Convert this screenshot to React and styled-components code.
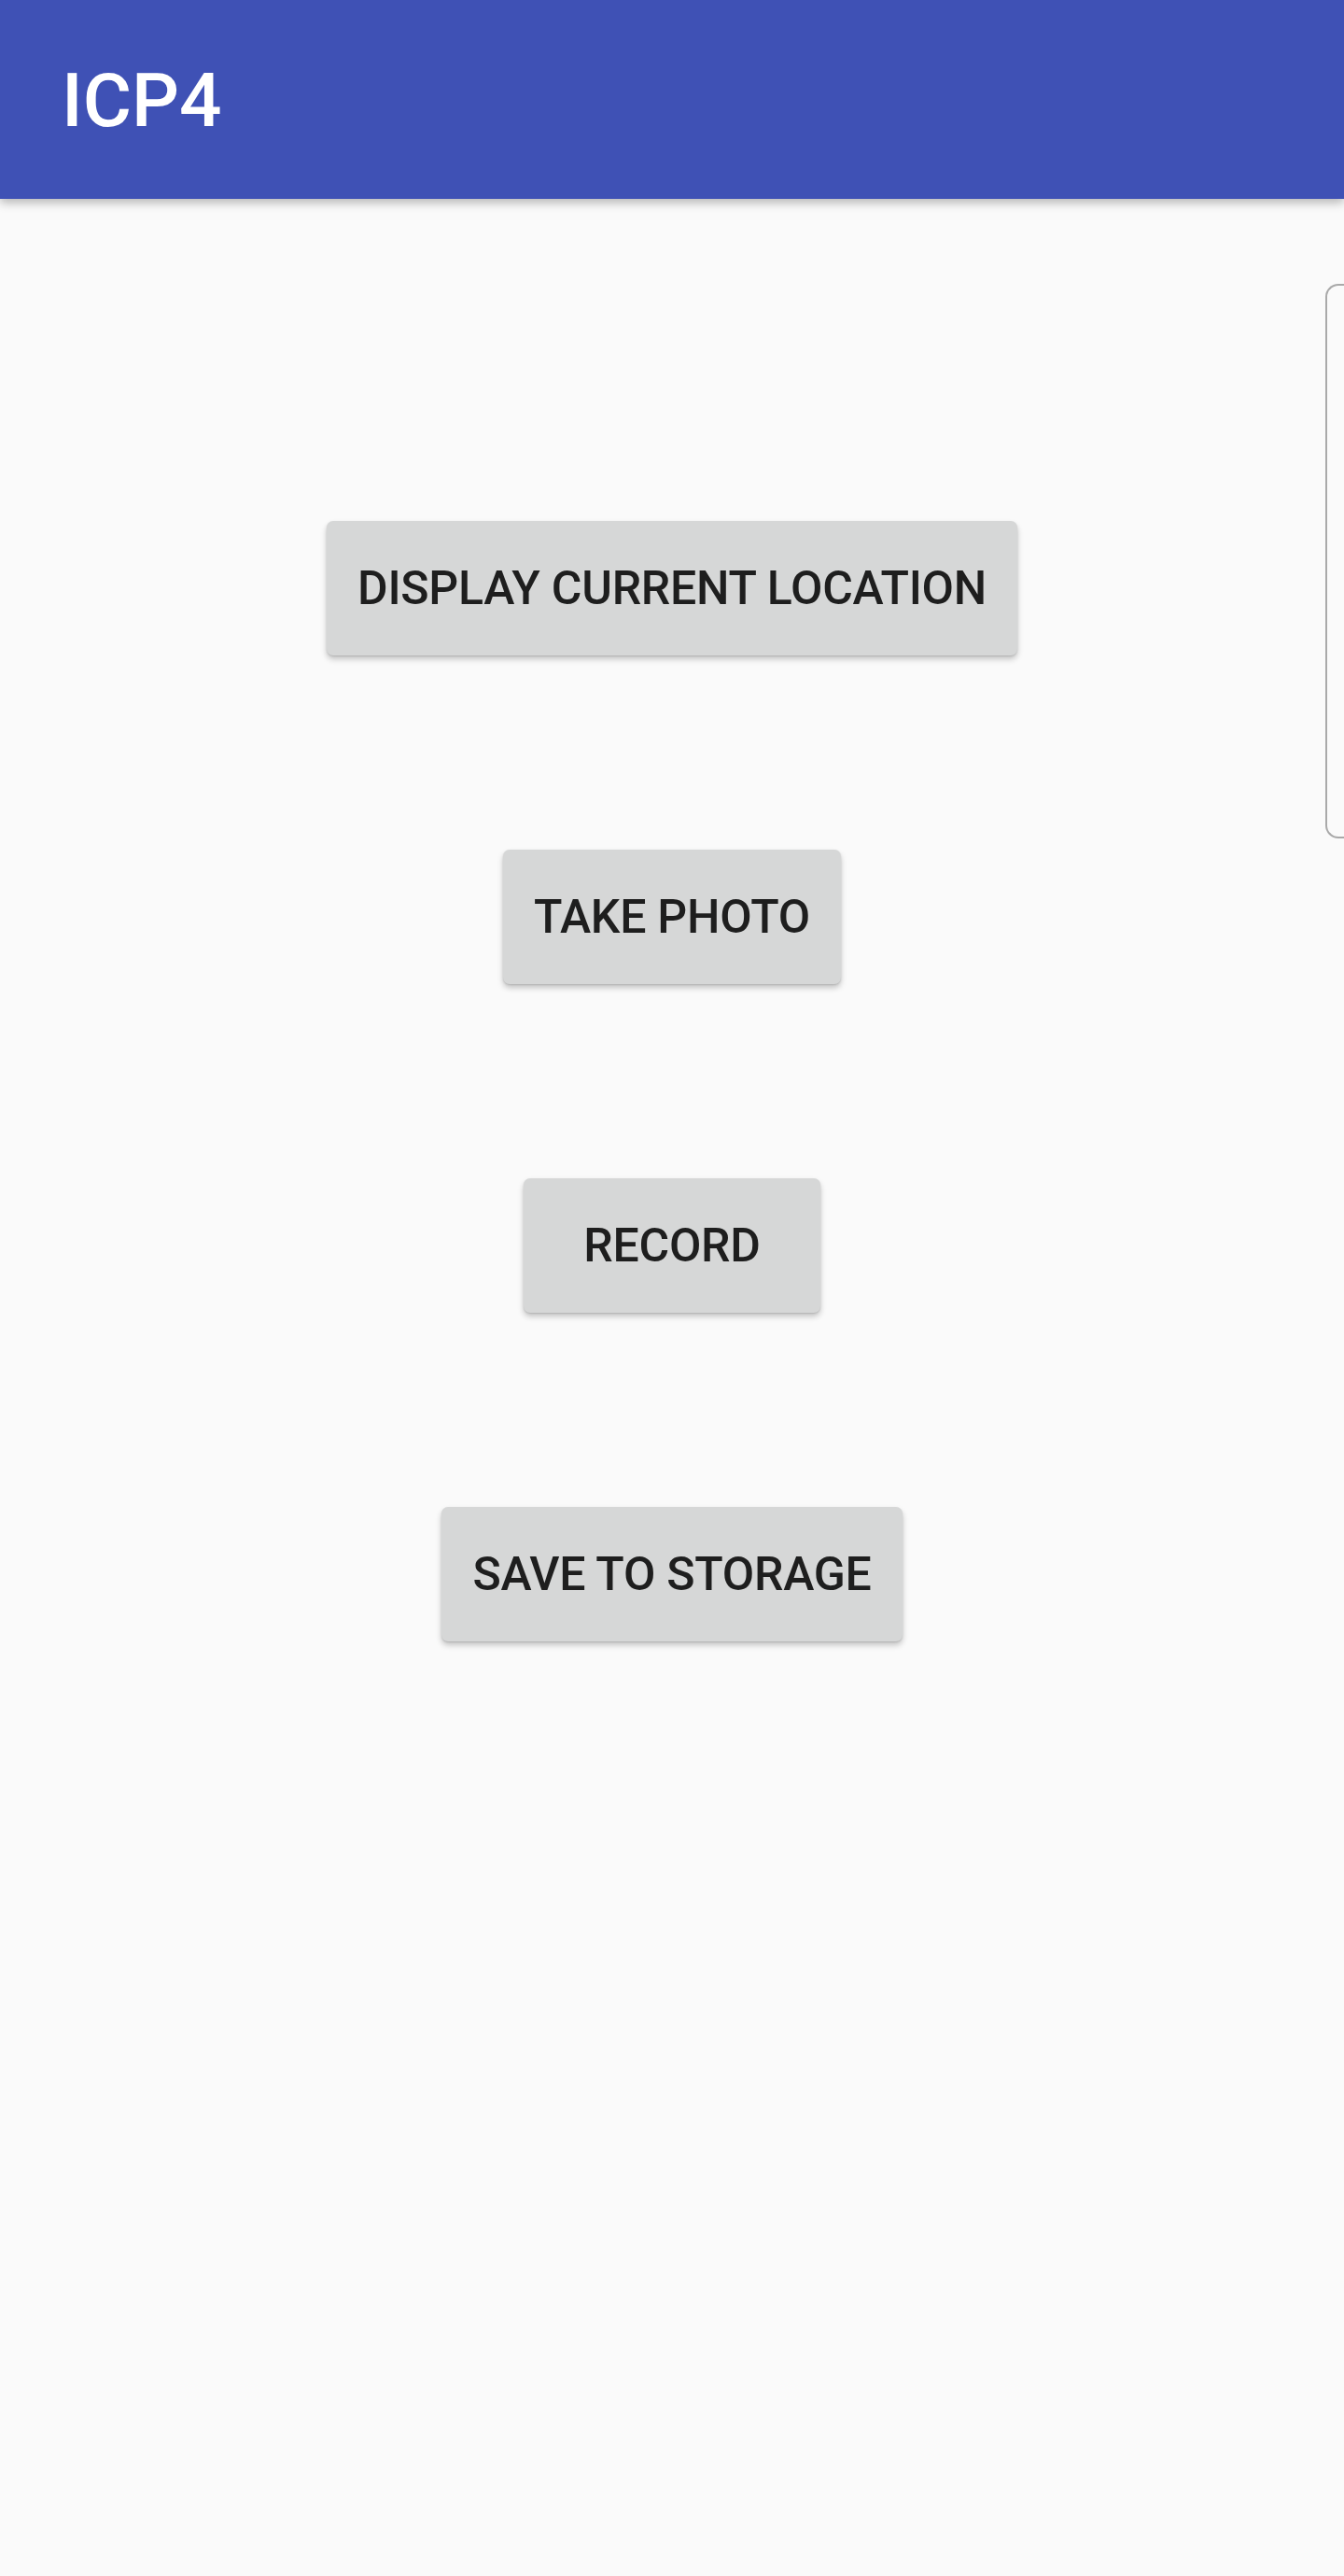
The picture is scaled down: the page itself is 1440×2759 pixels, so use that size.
import React from "react";
import styled, { createGlobalStyle } from "styled-components";

const GlobalStyle = createGlobalStyle`
  html, body {
    margin: 0;
    padding: 0;
    background: #fafafa;
  }
  body {
    font-family: Roboto, "Noto Sans", "Liberation Sans", sans-serif;
  }
`;

const Screen = styled.div`
  position: relative;
  width: 1440px;
  height: 2759px;
  background: #fafafa;
  overflow: hidden;
`;

const AppBar = styled.header`
  height: 213px;
  background: #3f51b5;
  display: flex;
  align-items: center;
  padding-left: 66px;
  box-shadow: 0 4px 10px rgba(0, 0, 0, 0.28);
  position: relative;
  z-index: 1;
`;

const Title = styled.h1`
  margin: 0;
  color: #ffffff;
  font-size: 80px;
  font-weight: 500;
  line-height: 1;
  padding-top: 2px;
`;

const Content = styled.main`
  display: flex;
  flex-direction: column;
  align-items: center;
  gap: 208px;
  padding-top: 345px;
`;

const Button = styled.button`
  min-width: 318px;
  height: 144px;
  padding: 0 33px;
  border: none;
  border-radius: 7px;
  background: #d6d7d7;
  color: #1e1e1e;
  font-family: Roboto, "Noto Sans", sans-serif;
  font-size: 50px;
  font-weight: 500;
  letter-spacing: -0.005em;
  box-shadow: 0 4px 6px rgba(0, 0, 0, 0.22), 0 1px 2px rgba(0, 0, 0, 0.12);
`;

const EdgeHandle = styled.div`
  position: absolute;
  top: 304px;
  right: -20px;
  width: 38px;
  height: 590px;
  border: 2px solid #a9a9a9;
  border-right: none;
  border-radius: 14px 0 0 14px;
`;

const labels = ["DISPLAY CURRENT LOCATION", "TAKE PHOTO", "RECORD", "SAVE TO STORAGE"];

export default function App() {
  return (
    <Screen>
      <GlobalStyle />
      <AppBar>
        <Title>ICP4</Title>
      </AppBar>
      <Content>
        {labels.map((label) => (
          <Button key={label}>{label}</Button>
        ))}
      </Content>
      <EdgeHandle />
    </Screen>
  );
}
